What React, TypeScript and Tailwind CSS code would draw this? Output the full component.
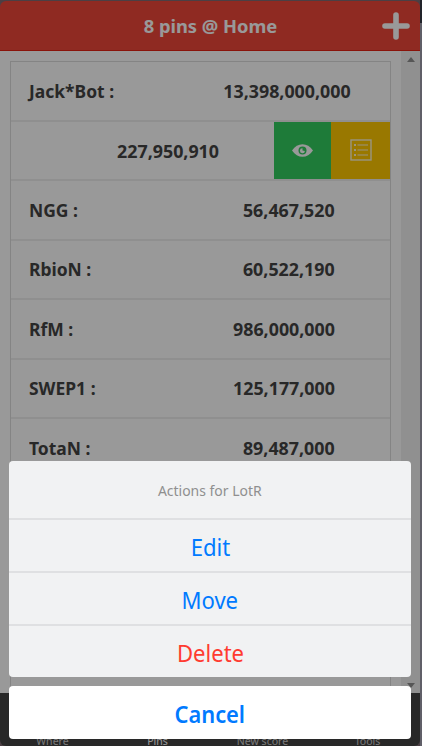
import React from "react";

const App = () => {
  return (
    <div className="relative flex h-[746px] w-[422px] overflow-hidden bg-[#7d6a72] font-['Noto_Sans','Open_Sans',sans-serif]">
      <div className="flex h-full w-[420px] shrink-0 flex-col pt-px">
        <header className="flex h-[50px] shrink-0 items-center rounded-t-md border-b border-[#e42112] bg-[#ef473a] pl-[38px]">
          <h1 className="flex-1 text-center text-[18.5px] font-bold leading-none text-white">
            <span className="inline-block translate-y-px scale-x-[0.99]">8 pins @ Home</span>
          </h1>
          <PlusIcon />
        </header>
        <div className="flex min-h-0 flex-1 bg-white">
          <main className="flex-1 px-[10px] pt-[10px]">
            <ul className="h-full border border-[#ddd] pt-[0.6px]">
              {pins.map((pin) => (
                <li
                  key={pin.id}
                  className="flex h-[59.4px] items-center justify-between border-b-2 border-[#eee] text-[18px] font-bold text-[#444]"
                >
                  {pin.open ? (
                    <>
                      <span className="w-[208px] origin-right scale-x-[0.99] pt-px text-right">{pin.score}</span>
                      <span className="flex h-full">
                        <span className="flex w-[57px] items-center justify-center bg-[#33cd5f]">
                          <EyeIcon />
                        </span>
                        <span className="flex w-[59px] items-center justify-center bg-[#ffc900]">
                          <ListIcon />
                        </span>
                      </span>
                    </>
                  ) : (
                    <>
                      <span className="ml-[18px] origin-left scale-x-[0.97] pt-px">{pin.name} :</span>
                      <span className={pin.wide ? "mr-[39px] origin-right scale-x-[0.99] pt-px" : "mr-[55px] origin-right scale-x-[0.99] pt-px"}>
                        {pin.score}
                      </span>
                    </>
                  )}
                </li>
              ))}
            </ul>
          </main>
          <div className="flex w-[19px] flex-col items-center justify-between bg-[#f1f1f1] pb-[5px] pt-[6px]">
            <svg width="8" height="5" viewBox="0 0 8 5" fill="#909090">
              <path d="M0 5L4 0L8 5Z" />
            </svg>
            <svg width="8" height="5" viewBox="0 0 8 5" fill="#909090">
              <path d="M0 0L4 5L8 0Z" />
            </svg>
          </div>
        </div>
        <nav className="grid h-[53px] shrink-0 grid-cols-4 items-end rounded-b-md bg-[#444] text-center text-[11px] leading-[11px] text-[#ccc]">
          {tabs.map((tab) => (
            <span key={tab} className={tab === "Pins" ? "scale-x-[0.96] text-white" : "scale-x-[0.96]"}>
              {tab}
            </span>
          ))}
        </nav>
      </div>
      <div className="flex w-[2px] flex-col bg-[#a19fad]">
        <div className="h-[23px] bg-[#3a3c48]" />
      </div>

      <div className="absolute inset-0 flex flex-col justify-end gap-[9px] bg-black/40 pb-[7px] pl-[9px] pr-[11px]">
        <div className="overflow-hidden rounded bg-[#f1f2f3] text-center">
          <p className="flex h-[59px] items-center justify-center border-b-2 border-[#dfe0e2] pt-px text-[15px] text-[#8f8f8f]">
            <span className="scale-x-[0.93]">Actions for LotR</span>
          </p>
          {actions.map((action) => (
            <button key={action.label} className={action.style}>
              <span className="inline-block scale-x-[0.92]">{action.label}</span>
            </button>
          ))}
        </div>
        <button className="h-[53px] shrink-0 rounded bg-white pt-[3px] text-[24px] font-semibold leading-none text-[#007aff]">
          <span className="inline-block scale-x-[0.91]">Cancel</span>
        </button>
      </div>
    </div>
  );
};

export default App;

const PlusIcon = () => (
  <svg className="mr-[10px]" width="28" height="28" viewBox="0 0 28 28">
    <path d="M14 3V25M3 14H25" stroke="#fff" strokeWidth="5.6" strokeLinecap="round" />
  </svg>
);

const EyeIcon = () => (
  <svg width="21" height="13" viewBox="0 0 21 13">
    <path d="M0 6.5C3 2.2 6.4 0.2 10.5 0.2S18 2.2 21 6.5C18 10.8 14.6 12.8 10.5 12.8S3 10.8 0 6.5Z" fill="#fff" />
    <circle cx="10.5" cy="6.5" r="4" fill="#33cd5f" />
    <path d="M10.5 6.5V4.2A2.5 2.5 0 1 0 12.9 6.9Z" fill="#fff" />
  </svg>
);

const ListIcon = () => (
  <svg className="mb-[2px]" width="22" height="22" viewBox="0 0 22 22" fill="none" stroke="#fff" strokeOpacity="0.85">
    <rect x="1" y="1" width="20" height="20" strokeWidth="1.4" />
    <path d="M7.5 6H18M7.5 11H18M7.5 16H18" strokeWidth="1.2" />
    <path d="M4 6H6M4 11H6M4 16H6" strokeWidth="2" />
  </svg>
);

const pins = [
  { id: 1, name: "Jack*Bot", score: "13,398,000,000", wide: true },
  { id: 2, name: "LotR", score: "227,950,910", open: true },
  { id: 3, name: "NGG", score: "56,467,520" },
  { id: 4, name: "RbioN", score: "60,522,190" },
  { id: 5, name: "RfM", score: "986,000,000" },
  { id: 6, name: "SWEP1", score: "125,177,000" },
  { id: 7, name: "TotaN", score: "89,487,000" },
];

const tabs = ["Where", "Pins", "New score", "Tools"];

const actions = [
  {
    label: "Edit",
    style: "block h-[53px] w-full border-b-2 border-[#dfe0e2] pt-[2px] text-[24px] leading-none text-[#007aff]",
  },
  {
    label: "Move",
    style: "block h-[53px] w-full border-b-2 border-[#dfe0e2] pt-[2px] text-[24px] leading-none text-[#007aff]",
  },
  {
    label: "Delete",
    style: "block h-[51px] w-full pt-[2px] text-[24px] leading-none text-[#ff3b30]",
  },
];
